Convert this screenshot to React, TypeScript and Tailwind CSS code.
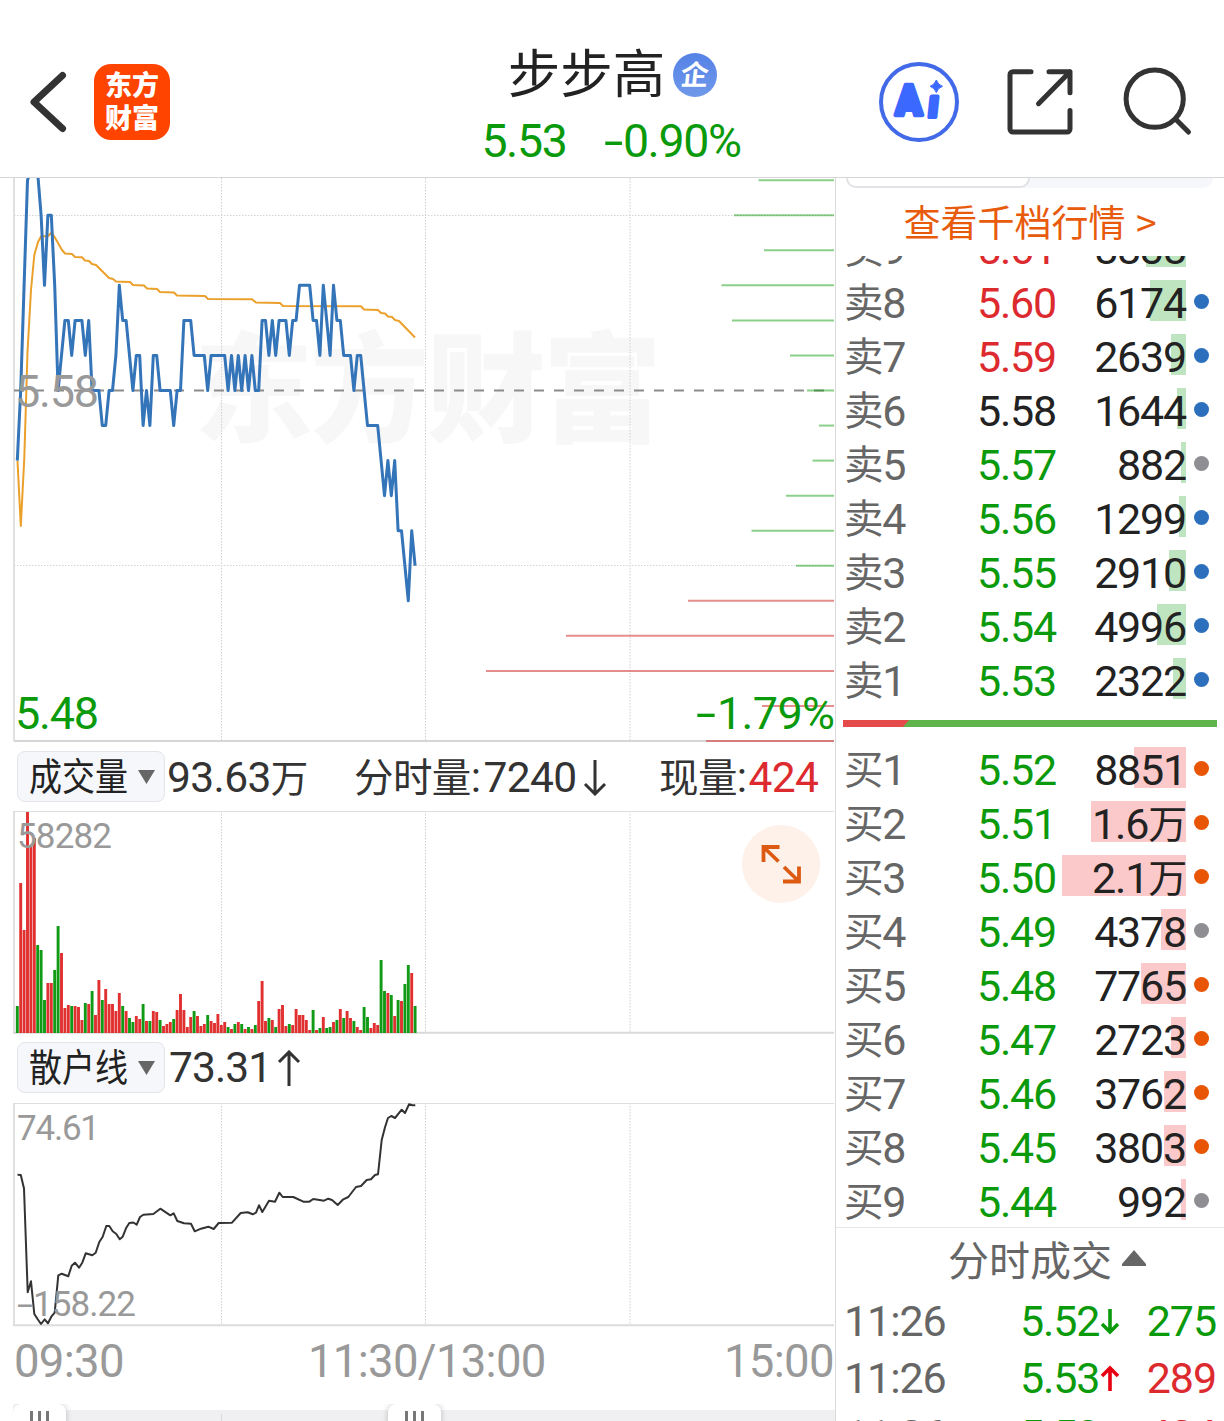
interface OrderRow {
    label: string;
    price: string;
    volume: string;
    bar: number;
    tone: 'up' | 'down' | 'flat';
    dot: 'blue' | 'orange' | 'gray';
}

interface Trade {
    time: string;
    price: string;
    dir: 'up' | 'down';
    qty: string;
}

const sells: OrderRow[] = [
    { label: '卖9', price: '5.61', volume: '8838', bar: 40, tone: 'up', dot: 'blue' },
    { label: '卖8', price: '5.60', volume: '6174', bar: 36, tone: 'up', dot: 'blue' },
    { label: '卖7', price: '5.59', volume: '2639', bar: 15, tone: 'up', dot: 'blue' },
    { label: '卖6', price: '5.58', volume: '1644', bar: 9, tone: 'flat', dot: 'blue' },
    { label: '卖5', price: '5.57', volume: '882', bar: 5, tone: 'down', dot: 'gray' },
    { label: '卖4', price: '5.56', volume: '1299', bar: 7, tone: 'down', dot: 'blue' },
    { label: '卖3', price: '5.55', volume: '2910', bar: 17, tone: 'down', dot: 'blue' },
    { label: '卖2', price: '5.54', volume: '4996', bar: 29, tone: 'down', dot: 'blue' },
    { label: '卖1', price: '5.53', volume: '2322', bar: 13, tone: 'down', dot: 'blue' },
];

const buys: OrderRow[] = [
    { label: '买1', price: '5.52', volume: '8851', bar: 52, tone: 'down', dot: 'orange' },
    { label: '买2', price: '5.51', volume: '1.6万', bar: 95, tone: 'down', dot: 'orange' },
    { label: '买3', price: '5.50', volume: '2.1万', bar: 124, tone: 'down', dot: 'orange' },
    { label: '买4', price: '5.49', volume: '4378', bar: 25, tone: 'down', dot: 'gray' },
    { label: '买5', price: '5.48', volume: '7765', bar: 45, tone: 'down', dot: 'orange' },
    { label: '买6', price: '5.47', volume: '2723', bar: 15, tone: 'down', dot: 'orange' },
    { label: '买7', price: '5.46', volume: '3762', bar: 22, tone: 'down', dot: 'orange' },
    { label: '买8', price: '5.45', volume: '3803', bar: 22, tone: 'down', dot: 'orange' },
    { label: '买9', price: '5.44', volume: '992', bar: 5, tone: 'down', dot: 'gray' },
];

const trades: Trade[] = [
    { time: '11:26', price: '5.52', dir: 'down', qty: '275' },
    { time: '11:26', price: '5.53', dir: 'up', qty: '289' },
    { time: '11:26', price: '5.53', dir: 'up', qty: '424' },
];

// price per minute, in cents above or below 5.58
const ticks = [
    -2, 0, 3, 6, 6.3, 7, 6.2, 5, 3, 5, 5, 3, 0, 1, 2, 2, 1, 2, 2, 2, 1, 2, 0, 0, 0, -1, -1, 0, 0, 1,
    3, 2, 2, 1, 0, 1, 1, -1, 0, -1, 1, 1, 0, 0, 0, 0, -1, 0, 0, 2, 2, 2, 1, 1, 1, 1, 0, 1, 1, 1,
    1, 1, 0, 1, 0, 1, 0, 1, 0, 1, 0, 0, 2, 2, 1, 2, 1, 2, 2, 2, 1, 2, 2, 3, 3, 3, 3, 2, 2, 1,
    3, 2, 1, 3, 2, 2, 1, 1, 1, 0, 1, 1, 0, -1, -1, -1, -1, -2, -3, -2, -3, -2, -4, -4, -5, -6, -4, -5,
];

const average =
    '17.5,461 20.8,526 24.3,458 27.5,352 31,290 34.3,255 38,242 41,236.5 48,236 51,233 54,236 58,243 62,250 65,253.5 72,254 75,257 82,257.3 85,260.5 89,261 92,264 96,265 109,278 113,279 116,281.5 130,282 133,285 144,285.5 147,288.5 157,289 160,292 174,292.5 177,295.5 205,296 208,299 252,299.3 256,302.5 280,303 283,306 361,306.3 364,309.5 378,310 381,313 385,313.5 388,316.5 392,317 395,320 399,321 415,337.5';

const volumes =
    'g27 r150 r103 r221 r186 r195 g88 g83 g33 r50 r50 g63 g107 r80 r25 r28 g27 r27 r26 r13 g30 r29 g42 r18 r53 g33 r44 r29 r29 r22 r40 g27 r22 g15 g11 r17 r14 g29 r12 g12 r22 r21 g13 r7 r9 r11 g14 r23 r39 r23 r6 r16 g22 r17 r7 r9 g18 r12 r10 r19 r8 r11 g6 r4 g9 r11 g9 r4 g6 r4 g8 r32 r52 r12 g15 r13 g6 r24 r28 r7 g9 r8 r24 r18 r18 r13 r3 g23 r3 g5 r16 g5 g6 r11 g13 r24 g15 r22 r15 g12 r6 r3 g26 g16 r5 r10 r8 g73 g42 r40 g38 r17 g33 r32 g49 g68 r60 g27'.split(
        ' ',
    );

const retail =
    '17.5,1174.7 20.8,1174.9 24,1188.5 27.7,1292.3 31,1281.3 34.3,1314 37.7,1319.3 41,1324 44.7,1319.3 48,1323.3 51.3,1316.7 54.7,1312.7 58.3,1275.3 61.7,1273.7 68.3,1276.3 71.7,1265.7 75,1262.7 79,1267.7 82.3,1262.7 85.7,1253.3 92.3,1255.3 95.7,1252.7 99.3,1242 102.7,1236.7 106.3,1226 109.3,1226 112.7,1231.3 116.3,1234 119.7,1239.3 122.7,1236.7 126.3,1227.7 129.3,1223 133.3,1222.5 136.7,1224.7 140,1217 143.3,1214.7 153.3,1214 160.3,1208.7 170.3,1215.3 173.7,1213.3 177.3,1221 184,1223.3 191,1223.7 194.7,1231.3 201,1228.7 208.3,1226.7 213.7,1229 218.7,1223 232,1222.7 240.7,1213 247.7,1212.3 252.7,1214.3 256,1212.7 259,1205.3 262.3,1212 269,1200.7 275,1201.7 279.3,1192.7 282.7,1197 293.3,1197 303.3,1201.7 309.3,1201.7 313.3,1199 324,1200.7 328.3,1198.7 332,1200 337.7,1205 343.3,1199.3 348.3,1197 356,1187 361,1186 366.7,1180 371,1179.3 375,1175 378,1174.3 381.7,1140 385,1127.3 388,1118 391.3,1116 395,1118 401.7,1109.7 405,1113 409,1104.3 412.3,1105.3 415.3,1105.3';

// left edge of each level in the price distribution, top to bottom
const profile = [758.5, 734, 764, 721.5, 732, 790, 807, 819, 812.5, 786, 751.5, 796, 688, 566, 486, 762, 706];

const toneClass = {
    up: 'text-[#dc2a2e]',
    down: 'text-[#0b9a0b]',
    flat: 'text-[#222]',
};

const dotClass = {
    blue: 'bg-[#2c70bd]',
    orange: 'bg-[#e85504]',
    gray: 'bg-[#8e8e93]',
};

// digits are set in Roboto, Chinese falls through to Noto
const num = "font-['Roboto','Noto_Sans_CJK_SC',sans-serif]";

const minuteX = (i: number) => 17.3 + i * 3.4;

function Grid({ top, bottom }: { top: number; bottom: number }) {
    return (
        <g stroke="#cfcfcf" strokeWidth="1" strokeDasharray="1.5 1.5">
            {[221.5, 425.5, 630].map((x) => (
                <line key={x} x1={x} x2={x} y1={top} y2={bottom} />
            ))}
        </g>
    );
}

function Header() {
    return (
        <header className="flex h-[178px] shrink-0 border-b border-[#d6d6d6]">
            <div className="flex w-[420px] items-start gap-[26px] pt-16 pl-7">
                <svg width="40" height="76" viewBox="28 64 40 76" fill="none">
                    <path d="M62.500 75.500 34 102l28.500 26.500" stroke="#333" strokeWidth="7" strokeLinecap="round" strokeLinejoin="round" />
                </svg>
                <div className="flex h-[76px] w-[76px] flex-col items-center rounded-[17px] bg-[#ff4400] pt-[3px] text-[27px] leading-[33px] font-black text-white">
                    <span>东方</span>
                    <span>财富</span>
                </div>
            </div>
            <div className="flex w-[384px] flex-col items-center">
                <div className="mt-[36px] flex h-[68px] items-center gap-[8px] pl-px">
                    <h1 className="text-[52.5px] leading-[68px] text-[#222]">步步高</h1>
                    <span className="mt-[9px] flex h-11 w-11 items-center justify-center rounded-full bg-linear-to-b from-[#5581e6] to-[#7099ea] pb-1 text-[28px] leading-7 font-bold text-white">
                        <span className="-skew-x-6">企</span>
                    </span>
                </div>
                <div className={`mt-[7px] mr-[2px] flex gap-[38px] text-[46.5px] leading-[60px] tracking-[-1.4px] text-[#0b9a0b] ${num}`}>
                    <span>5.53</span>
                    <span>
                        <span className="mr-[7px] inline-block origin-left scale-x-150">-</span>0.90%
                    </span>
                </div>
            </div>
            <svg width="420" height="177" viewBox="804 0 420 177" fill="none">
                <circle cx="919" cy="102" r="38" stroke="#4169e8" strokeWidth="4" />
                <g fontFamily="Roboto" fontSize="42" fontWeight="900" fill="#3b68ff" stroke="#3b68ff" strokeWidth="4.5" strokeLinejoin="round">
                    <text transform="translate(895.500 115) scale(0.930 1)">A</text>
                    <text transform="translate(927 117) skewX(-6) scale(0.880 0.920)">ı</text>
                </g>
                <path d="M936.3 80q1.6 4.9 6.2 6.3-4.6 1.5-6.2 6.3-1.6-4.8-6.2-6.3 4.6-1.4 6.2-6.3Z" fill="#3b68ff" stroke="#3b68ff" />
                <g stroke="#333" strokeWidth="5" strokeLinecap="round" strokeLinejoin="round">
                    <path d="M1031 71.7h-18a3 3 0 0 0-3 3V129a3 3 0 0 0 3 3h54a3 3 0 0 0 3-3v-18.5" />
                    <path d="M1049 71.7h21v21M1070 71.7l-31.5 32" />
                    <circle cx="1154.7" cy="98.7" r="28.6" />
                    <path d="m1176 119.500 12.500 12.500" />
                </g>
            </svg>
        </header>
    );
}

function PriceChart() {
    const line = ticks.map((t, i) => `${minuteX(i)},${390.5 - t * 35.05}`).join(' ');

    return (
        <svg className="block shrink-0" width="835" height="565" viewBox="0 178 835 565" fill="none">
            <text x="194" y="433" fontSize="119" fontWeight="900" fill="#f7f7f7" textLength="468">
                东方财富
            </text>
            <Grid top={178} bottom={741} />
            <path d="M14 215.500h820M14 565.500h820" stroke="#d4d4d4" strokeDasharray="1.5 1.5" />
            <path d="M14 178v563" stroke="#e0e0e0" strokeWidth="2" />
            <path d="M14 741h820" stroke="#d6d6d6" strokeWidth="2" />
            <path d="M14 390.500h820" stroke="#8c8c8c" strokeWidth="2" strokeDasharray="10 10" />
            {profile.map((x, i) => (
                <line
                    key={i}
                    x1={x}
                    x2="834"
                    y1={180.2 + i * 35.05}
                    y2={180.2 + i * 35.05}
                    stroke={i < 12 ? '#0b9a0b' : '#d43c3c'}
                    strokeOpacity={i < 12 ? 0.48 : 0.58}
                    strokeWidth="2"
                />
            ))}
            <polyline points={average} stroke="#eba02b" strokeWidth="2" strokeLinejoin="round" />
            <polyline points={line} stroke="#3474b8" strokeWidth="3" strokeLinejoin="round" />
            <g className={num} fontSize="45">
                <text x="15" y="407" fill="#999" textLength="84">5.58</text>
                <text x="15" y="729" fill="#0b9a0b" textLength="84">5.48</text>
                <text x="696" y="729" fill="#0b9a0b">
                    <tspan textLength="20" lengthAdjust="spacingAndGlyphs">-</tspan>
                    <tspan x="717" textLength="118">1.79%</tspan>
                </text>
            </g>
        </svg>
    );
}

function IndicatorButton({ name }: { name: string }) {
    return (
        <button className="flex h-[51px] w-[148px] shrink-0 items-center justify-between rounded-lg border border-[#e2e5e9] bg-[#f6f7fa] pr-[9px] pl-[11px] font-['Noto_Sans_CJK_SC',sans-serif] tracking-normal">
            <span className="scale-y-[1.14] pb-[5px] text-[33px] leading-10 text-[#222]">{name}</span>
            <svg width="17" height="14" viewBox="0 0 17 14">
                <path d="M0 0h17L8.500 14Z" fill="#666" />
            </svg>
        </button>
    );
}

function Arrow({ dir }: { dir: 'up' | 'down' }) {
    return (
        <svg className={dir === 'up' ? '' : 'rotate-180'} width="24" height="36" viewBox="0 0 24 36" fill="none">
            <path d="M12 36V2M2 12 12 2l10 10" stroke="#333" strokeWidth="3" />
        </svg>
    );
}

function VolumeChart() {
    return (
        <svg className="block shrink-0" width="835" height="223" viewBox="0 811 835 223" fill="none">
            <Grid top={811} bottom={1032} />
            <path d="M14 811v223" stroke="#e0e0e0" strokeWidth="2" />
            <path d="M13 811.500h821" stroke="#dedede" />
            <path d="M13 1032.800h821" stroke="#d9d9d9" strokeWidth="2" />
            {volumes.map((v, i) => {
                const h = Number(v.slice(1));
                return <rect key={i} x={minuteX(i) - 1.45} y={1033 - h} width="2.9" height={h} fill={v[0] === 'r' ? '#e03030' : '#119a16'} />;
            })}
            <text className={num} x="17" y="848" fontSize="35" fill="#999" textLength="95">58282</text>
            <circle cx="781" cy="864" r="39" fill="#fef1e9" />
            <path d="M779.500 847h-16v15M764 847.500l14.500 14M783 881.500h16v-15M798.500 881l-14.500-14" stroke="#dd5a13" strokeWidth="3.8" />
        </svg>
    );
}

function RetailChart() {
    return (
        <svg className="block shrink-0" width="835" height="224" viewBox="0 1103 835 224" fill="none">
            <Grid top={1103} bottom={1325} />
            <path d="M14 1103v223" stroke="#e0e0e0" strokeWidth="2" />
            <path d="M13 1103.500h821" stroke="#dedede" />
            <path d="M13 1325.200h821" stroke="#dcdcdc" strokeWidth="2" />
            <polyline points={retail} stroke="#333" strokeWidth="2" strokeLinejoin="round" />
            <g className={num} fontSize="35" fill="#999">
                <text x="17" y="1140" textLength="83">74.61</text>
                <text x="17" y="1316">
                    <tspan textLength="16" lengthAdjust="spacingAndGlyphs">-</tspan>
                    <tspan x="33" textLength="103">158.22</tspan>
                </text>
            </g>
        </svg>
    );
}

function Handle() {
    return (
        <div className="flex h-10 w-[53px] justify-center gap-[5px] rounded-lg bg-white pt-[7px] shadow-[0_0_6px_rgba(0,0,0,0.22)]">
            <i className="w-[3px] bg-[#777]" />
            <i className="w-[3px] bg-[#777]" />
            <i className="w-[3px] bg-[#777]" />
        </div>
    );
}

function Charts() {
    return (
        <section className={`flex w-[836px] shrink-0 flex-col border-r border-[#dadada] ${num}`}>
            <PriceChart />
            <div className="flex h-[68px] shrink-0 items-start pt-2 pl-[17px] text-[42.5px] leading-[53px] tracking-[-0.6px] text-[#333]">
                <IndicatorButton name="成交量" />
                <div className="ml-[2px] w-[187px]">
                    93.63<span className="text-[37.5px]">万</span>
                </div>
                <div className="flex w-[305px] items-center gap-[6px]">
                    <span>
                        <span className="text-[39.5px]">分时量</span>:<span className="ml-[3px]">7240</span>
                    </span>
                    <Arrow dir="down" />
                </div>
                <div>
                    <span className="text-[39.5px]">现量</span>:<span className="ml-[2px] text-[#dc2a2e]">424</span>
                </div>
            </div>
            <VolumeChart />
            <div className="flex h-[69px] shrink-0 items-start pt-2 pl-[17px] text-[42.5px] leading-[52px] tracking-[-0.9px] text-[#333]">
                <IndicatorButton name="散户线" />
                <div className="ml-[4px] flex items-center gap-[6px]">
                    <span>73.31</span>
                    <Arrow dir="up" />
                </div>
            </div>
            <RetailChart />
            <div className="flex h-[77px] shrink-0 pt-[3px] pl-[14px] text-[45.5px] leading-[64px] tracking-[-0.7px] text-[#999]">
                <span className="w-[294px]">09:30</span>
                <span className="w-[416px]">11:30/13:00</span>
                <span>15:00</span>
            </div>
            <div className="ml-[13px] flex h-[17px] overflow-hidden bg-linear-to-b from-white from-[6px] to-[#f0f0f2] to-[6px]">
                <Handle />
                <div className="mt-[10px] w-[156px] border-r border-[#d8d8d8]" />
                <div className="w-[166px]" />
                <Handle />
            </div>
        </section>
    );
}

function Order({ row, side }: { row: OrderRow; side: 'sell' | 'buy' }) {
    return (
        <div className="flex h-[54px] shrink-0 items-start pl-[8px] text-[43px] leading-[55px] tracking-[-1.2px]">
            <span className="w-[133px] text-[#666]">
                <span className="align-[1px] text-[39.5px] leading-none">{row.label[0]}</span>
                {row.label[1]}
            </span>
            <span className={`w-[83px] ${toneClass[row.tone]}`}>{row.price}</span>
            <div className="relative flex h-[54px] w-[126px] justify-end">
                <div
                    className={`absolute top-1 right-0 h-[41px] ${side === 'sell' ? 'bg-[#bfe5c0]' : 'bg-[#fbc9c9]'}`}
                    style={{ width: row.bar }}
                />
                <span className="relative text-[#222]">
                    {row.volume.replace('万', '')}
                    {row.volume.endsWith('万') && <span className="align-[1px] text-[39px] leading-none">万</span>}
                </span>
            </div>
            <span className={`mt-[18px] ml-2 h-[15px] w-[15px] rounded-full ${dotClass[row.dot]}`} />
        </div>
    );
}

function OrderBook() {
    return (
        <section className="flex w-[388px] flex-col">
            <div className="ml-[10px] h-[10px] w-[367px] shrink-0 rounded-b-xl bg-[#f6f7fa]">
                <div className="h-[10px] w-[184px] rounded-b-xl border-2 border-t-0 border-[#e2e3e6] bg-white" />
            </div>
            <div className="h-[68px] shrink-0 pt-[6px] text-center text-[37px] leading-[54px] text-[#e85a0c]">
                查看千档行情 <span className="ml-[2px]">&gt;</span>
            </div>
            <div className={`flex h-[452px] shrink-0 flex-col justify-end overflow-hidden ${num}`}>
                {sells.map((row) => (
                    <Order key={row.label} row={row} side="sell" />
                ))}
            </div>
            <svg className="mt-3 ml-[7px] block shrink-0" width="374" height="7" viewBox="0 0 374 7">
                <path d="M0 0h374v7H0z" fill="#5fb54c" />
                <path d="M0 0h66l-6 7H0z" fill="#e54b4b" />
            </svg>
            <div className={`mt-4 h-[485px] shrink-0 overflow-hidden border-b border-[#e6e6e6] ${num}`}>
                {buys.map((row) => (
                    <Order key={row.label} row={row} side="buy" />
                ))}
            </div>
            <div className="flex h-[65px] shrink-0 items-center justify-center gap-[10px] pb-[5px] pl-[34px] text-[41px] leading-[60px] text-[#666]">
                分时成交
                <svg width="24" height="16" viewBox="0 0 24 16">
                    <path d="M12 0 24 14v2H0v-2Z" fill="#666" />
                </svg>
            </div>
            {trades.map((t, i) => (
                <div key={i} className={`flex h-[57px] shrink-0 pl-[8px] text-[43px] leading-[57px] tracking-[-1.1px] ${num}`}>
                    <span className="w-[176px] text-[#666]">{t.time}</span>
                    <span className="w-[80px] text-[#0b9a0b]">{t.price}</span>
                    <svg className={`mt-[15px] ${t.dir === 'down' ? 'rotate-180' : ''}`} width="20" height="27" viewBox="0 0 20 27" fill="none">
                        <path d="M10 26V3M2 11l8-8 8 8" stroke={t.dir === 'up' ? '#e60012' : '#0b9a0b'} strokeWidth="3.6" />
                    </svg>
                    <span className={`w-[96px] text-right ${t.dir === 'up' ? 'text-[#dc2a2e]' : 'text-[#0b9a0b]'}`}>{t.qty}</span>
                </div>
            ))}
        </section>
    );
}

export default function App() {
    return (
        <div className="flex h-[1421px] w-[1224px] flex-col overflow-hidden bg-white font-['Noto_Sans_CJK_SC','Noto_Sans',sans-serif]">
            <Header />
            <main className="flex min-h-0 flex-1 overflow-hidden">
                <Charts />
                <OrderBook />
            </main>
        </div>
    );
}
